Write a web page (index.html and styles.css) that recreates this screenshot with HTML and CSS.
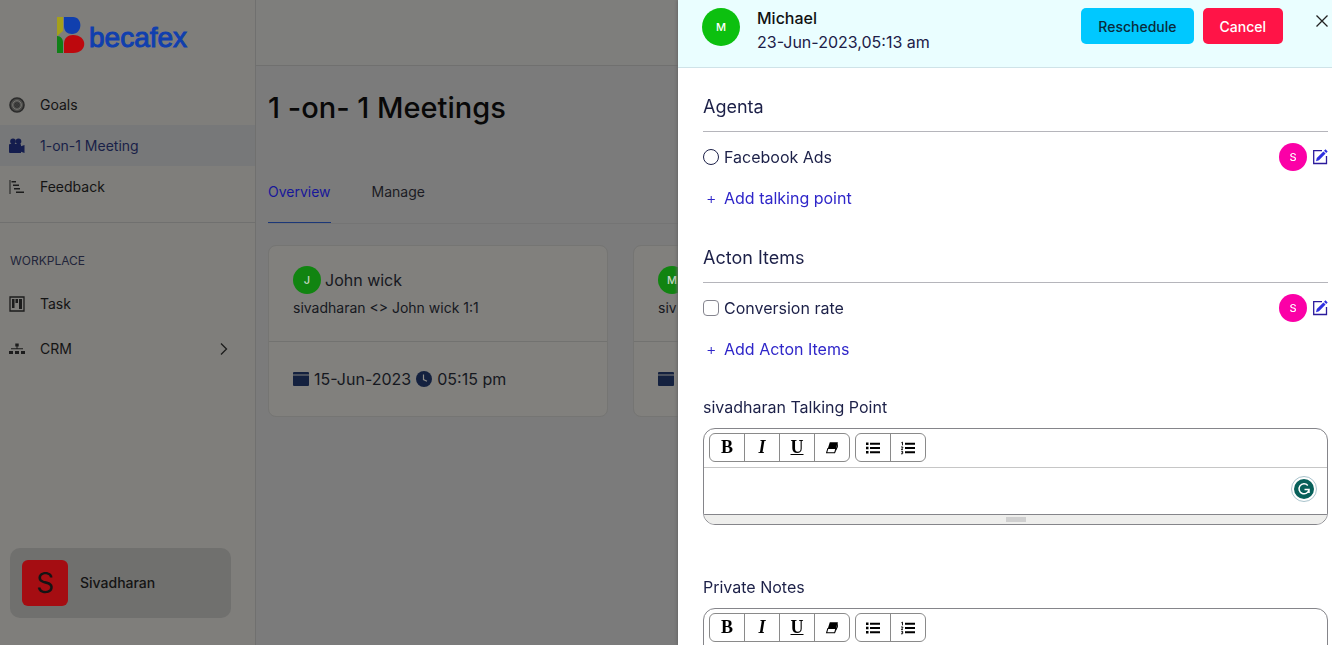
FILE: index.html
```html
<!DOCTYPE html>
<html lang="en">
<head>
<meta charset="UTF-8">
<meta name="viewport" content="width=device-width, initial-scale=1.0">
<title>1-on-1 Meetings</title>
<link rel="stylesheet" href="styles.css">
</head>
<body>
<svg class="defs" aria-hidden="true">
    <symbol id="calendar" viewBox="0 0 16 16"><path d="M1 1h14a1 1 0 0 1 1 1v1.500H0V2a1 1 0 0 1 1-1zM0 4.500h16V14a1 1 0 0 1-1 1H1a1 1 0 0 1-1-1z"/></symbol>
    <symbol id="edit" viewBox="0 0 16 16"><path d="M10 1.700H1.700v12.800h12.800V7" fill="none" stroke="#2b1a9c" stroke-width="1.300"/><path d="M13.500.3l2.200 2.200-1.500 1.500-2.200-2.200zM11.400 2.400l2.200 2.200-6.600 6.600-3 1 .8-3.200z" fill="#2f2fe0"/></symbol>
    <symbol id="eraser" viewBox="0 0 16 16"><path d="M5.500 1.500h9.200L12.500 8.500H3.300z"/><path d="M3.300 8.500h9.200l-1.500 5H1.800z" fill="#fff" stroke="#000" stroke-width="1.200"/><path d="M12.500 8.500l2.200-7v5.300l-3.200 6.700z"/></symbol>
    <symbol id="ul" viewBox="0 0 16 16"><path d="M1 2.500h2.500V5H1zM1 6.800h2.500v2.500H1zM1 11h2.500v2.500H1zM5 2.800h10v2H5zM5 7h10v2H5zM5 11.200h10v2H5z"/></symbol>
    <symbol id="ol" viewBox="0 0 16 16"><path d="M5 2.800h10v2H5zM5 7h10v2H5zM5 11.200h10v2H5z"/><path d="M1.300 2.800l1.200-.7v3.200M1 7h1.800v1L1.200 9.400H3M1.200 11.300h1.600l-.8 1 .9.300-.3 1.200H1" fill="none" stroke="#000" stroke-width=".9"/></symbol>
</svg>

<div class="app">
    <aside class="sidebar">
        <a class="logo" href="#">
            <svg width="28" height="38" viewBox="0 0 28 38">
                <path d="M0 1h6v14L0 20z" fill="#a5a01a"/>
                <path d="M0 20c4 0 6 3 6 7v10H0z" fill="#108017"/>
                <path d="M7 1h9c10 0 10 17-1 17-5 0-8-3-8-8z" fill="#103fae"/>
                <path d="M7 37V28c0-6 4-9 9-9 15 0 15 18 0 18z" fill="#bd080d"/>
            </svg>
            <span>becafex</span>
        </a>
        <nav class="menu">
            <a href="#"><svg width="16" height="16" viewBox="0 0 16 16" fill="none" stroke="#2b2b2b"><circle cx="8" cy="8" r="7" stroke-width="1.600" fill="#4c4c4a"/><circle cx="8" cy="8" r="4.300" stroke="#777672" stroke-width="1"/><circle cx="8" cy="8" r="2.200"/><circle cx="8" cy="8" r=".5"/></svg>Goals</a>
            <a class="active" href="#"><svg width="16" height="16" viewBox="0 0 16 16" fill="#141d4e"><circle cx="4" cy="3.400" r="2.800"/><circle cx="9.500" cy="3.400" r="2.800"/><path d="M1 6h10a1 1 0 0 1 1 1v1.200L15.500 7v8L12 13.800V15H1a1 1 0 0 1-1-1V7a1 1 0 0 1 1-1z"/></svg>1-on-1 Meeting</a>
            <a href="#"><svg width="16" height="16" viewBox="0 0 16 16" fill="none" stroke="#1c1c1c" stroke-width="1.400"><path d="M1 1v14" stroke-width="1"/><path d="M2.500 2.700H7M4 6.200h6M5 9.700h6M7 13.200h8"/></svg>Feedback</a>
        </nav>
        <h2 class="menu-title">WORKPLACE</h2>
        <nav class="menu workplace">
            <a href="#"><svg width="16" height="16" viewBox="0 0 16 16" fill="#1c1c1c"><path d="M1 1h14v14H1z" fill="none" stroke="#1c1c1c" stroke-width="1.300"/><path d="M3 3h2.500v9H3zM6.500 3h2.500v4H6.500zM10 3h3v10h-3z"/></svg>Task</a>
            <a href="#"><svg width="16" height="16" viewBox="0 0 16 16" fill="#1c1c1c"><path d="M6.300 2.500h3.400v3H8.500v1.700H14v1h-12v-1h5.500V5.500H6.300zM0 10h4v3H0zM6 10h4v3H6zM12 10h4v3h-4z"/></svg>CRM<svg class="arrow" width="14" height="14" viewBox="0 0 14 14" fill="none" stroke="#1c1c1c" stroke-width="1.300"><path d="M4 1.500L9.500 7 4 12.500"/></svg></a>
        </nav>
        <div class="user">
            <span class="user-img">S</span>
            <span>Sivadharan</span>
        </div>
    </aside>

    <main class="main">
        <div class="topbar"></div>
        <h1>1 -on- 1 Meetings</h1>
        <nav class="tabs">
            <a class="active" href="#">Overview</a>
            <a href="#">Manage</a>
        </nav>
        <div class="cards">
            <div class="card">
                <div class="card-top">
                    <div class="person"><span class="avatar">J</span>John wick</div>
                    <p>sivadharan &lt;&gt; John wick 1:1</p>
                </div>
                <div class="card-date">
                    <svg width="16" height="16"><use href="#calendar"/></svg>15-Jun-2023
                    <svg width="16" height="16" viewBox="0 0 16 16"><circle cx="8" cy="8" r="8"/><path d="M7.500 3.500V8.500l3.500 1.700" fill="none" stroke="#8d8c88" stroke-width="1.200"/></svg>05:15 pm
                </div>
            </div>
            <div class="card">
                <div class="card-top">
                    <div class="person"><span class="avatar">M</span></div>
                    <p>siv</p>
                </div>
                <div class="card-date">
                    <svg width="16" height="16"><use href="#calendar"/></svg>
                </div>
            </div>
        </div>
    </main>
</div>

<section class="drawer">
    <header class="drawer-head">
        <span class="avatar big">M</span>
        <div class="who">
            <strong>Michael</strong>
            <span>23-Jun-2023,05:13 am</span>
        </div>
        <button class="btn blue">Reschedule</button>
        <button class="btn red">Cancel</button>
        <button class="close" aria-label="Close"><svg width="14" height="14" viewBox="0 0 14 14" stroke="#222" stroke-width="1.300"><path d="M1.500 1.500l11 11M12.500 1.500l-11 11"/></svg></button>
    </header>
    <div class="drawer-body">
        <div class="group">
            <h3>Agenta</h3>
            <div class="item">
                <input type="radio" id="ads"><label for="ads">Facebook Ads</label>
                <span class="avatar pink">S</span>
                <button class="edit" aria-label="Edit"><svg width="16" height="16"><use href="#edit"/></svg></button>
            </div>
            <a class="add" href="#"><span>+</span>Add talking point</a>
        </div>
        <div class="group">
            <h3>Acton Items</h3>
            <div class="item">
                <input type="checkbox" id="rate"><label for="rate">Conversion rate</label>
                <span class="avatar pink">S</span>
                <button class="edit" aria-label="Edit"><svg width="16" height="16"><use href="#edit"/></svg></button>
            </div>
            <a class="add" href="#"><span>+</span>Add Acton Items</a>
        </div>

        <label class="note-label" for="talk">sivadharan Talking Point</label>
        <div class="editor">
            <div class="toolbar">
                <div class="tools">
                    <button><b>B</b></button><button><i>I</i></button><button><u>U</u></button><button aria-label="Clear"><svg width="14" height="14"><use href="#eraser"/></svg></button>
                </div>
                <div class="tools">
                    <button aria-label="Bullets"><svg width="16" height="16"><use href="#ul"/></svg></button><button aria-label="Numbers"><svg width="16" height="16"><use href="#ol"/></svg></button>
                </div>
            </div>
            <textarea id="talk"></textarea>
            <div class="resize"><span></span></div>
            <span class="grammar"><svg width="20" height="20" viewBox="0 0 20 20" fill="none" stroke="#fff" stroke-width="1.500"><circle cx="10" cy="10" r="10" fill="#07605a" stroke="none"/><path d="M13.800 6.500A5 5 0 1 0 15 10.500H10.500M15 10.500V14"/></svg></span>
        </div>

        <label class="note-label" for="notes">Private Notes</label>
        <div class="editor">
            <div class="toolbar">
                <div class="tools">
                    <button><b>B</b></button><button><i>I</i></button><button><u>U</u></button><button aria-label="Clear"><svg width="14" height="14"><use href="#eraser"/></svg></button>
                </div>
                <div class="tools">
                    <button aria-label="Bullets"><svg width="16" height="16"><use href="#ul"/></svg></button><button aria-label="Numbers"><svg width="16" height="16"><use href="#ol"/></svg></button>
                </div>
            </div>
            <textarea id="notes"></textarea>
            <div class="resize"><span></span></div>
        </div>
    </div>
</section>
</body>
</html>
```
FILE: styles.css
```css
* {
    box-sizing: border-box;
}
body {
    margin: 0;
    font-family: Inter, Arial, sans-serif;
    font-size: 16px;
    line-height: 24px;
    color: #1c2048;
    overflow: hidden;
}
a {
    color: inherit;
    text-decoration: none;
}
button {
    font-family: inherit;
    cursor: pointer;
}
.defs {
    display: none;
}
.app {
    display: flex;
    height: 100vh;
    background: #7b7b7b;
}

/* sidebar */
.sidebar {
    display: flex;
    flex-direction: column;
    width: 256px;
    flex-shrink: 0;
    background: #7f7e7b;
    border-right: 1px solid #70706f;
}
.logo {
    display: flex;
    gap: 4px;
    height: 84px;
    padding: 16px 0 0 57px;
    font-family: "Liberation Sans", Arial, sans-serif;
    font-size: 28px;
    line-height: 44px;
    color: #103fae;
    -webkit-text-stroke: 1px #103fae;
}
.menu {
    display: flex;
    flex-direction: column;
    font-size: 14px;
    color: #141414;
    padding-bottom: 15px;
    border-bottom: 1px solid #70706f;
}
.menu a {
    display: flex;
    align-items: center;
    gap: 15px;
    height: 41px;
    padding: 0 24px 0 9px;
}
.menu a.active {
    background: #777879;
    color: #192148;
}
.menu-title {
    margin: 26px 0 8px 10px;
    font-size: 12px;
    font-weight: 400;
    color: #22253a;
}
.workplace {
    border: 0;
}
.workplace a {
    height: 45px;
}
.arrow {
    margin-left: auto;
}
.user {
    display: flex;
    align-items: center;
    gap: 12px;
    margin: auto 24px 27px 10px;
    padding: 12px;
    background: #70706e;
    border-radius: 10px;
    font-size: 14px;
    font-weight: 500;
    color: #141414;
}
.user-img {
    width: 46px;
    height: 46px;
    border-radius: 6px;
    background: #a50d12;
    font-size: 28px;
    font-weight: 400;
    line-height: 46px;
    text-align: center;
}

/* page */
.main {
    flex: 1;
    min-width: 0;
}
.topbar {
    height: 66px;
    background: #7e7e7c;
    border-bottom: 1px solid #70706f;
}
h1 {
    margin: 24px 12px 54px;
    font-size: 29px;
    font-weight: 500;
    line-height: 36px;
    color: #080808;
}
.tabs {
    display: flex;
    gap: 41px;
    margin: 0 12px 21px;
    border-bottom: 1px solid #747474;
    font-size: 14px;
    color: #1c1c24;
}
.tabs a {
    height: 43px;
    border-bottom: 1px solid transparent;
}
.tabs a.active {
    color: #17179a;
    border-color: #1b3778;
}
.cards {
    display: grid;
    grid-template-columns: repeat(auto-fill, 340px);
    gap: 25px;
    padding: 0 12px;
}
.card {
    background: #81807d;
    border: 1px solid #757573;
    border-radius: 8px;
    color: #16181f;
}
.card-top {
    height: 96px;
    padding: 20px 24px;
    border-bottom: 1px solid #727270;
}
.person {
    display: flex;
    align-items: center;
    gap: 4px;
    height: 28px;
}
.card p {
    margin: 2px 0 0;
    font-size: 14px;
}
.card-date {
    display: flex;
    align-items: center;
    gap: 5px;
    height: 74px;
    padding: 0 24px;
    fill: #14213f;
}
.avatar {
    width: 28px;
    height: 28px;
    flex-shrink: 0;
    border-radius: 50%;
    background: #118411;
    color: #c6d6c2;
    font-size: 11px;
    font-weight: 500;
    line-height: 28px;
    text-align: center;
}

/* meeting drawer */
.drawer {
    position: fixed;
    top: 0;
    right: 0;
    bottom: 0;
    width: 654px;
    max-width: 100%;
    overflow: hidden;
    background: #fff;
    box-shadow: -1px 0 3px #666;
}
.drawer-head {
    display: flex;
    align-items: flex-start;
    height: 68px;
    padding: 8px 3px 0 24px;
    background: #eafeff;
    border-bottom: 1px solid #cfe3e8;
}
.avatar.big {
    width: 38px;
    height: 38px;
    margin-right: 17px;
    background: #0cc00f;
    color: #fff;
    line-height: 38px;
}
.who {
    display: flex;
    flex-direction: column;
    margin: -2px auto 0 0;
}
.who strong {
    font-weight: 500;
    color: #111;
}
.btn {
    height: 36px;
    margin-right: 9px;
    padding: 0 17px;
    border: 0;
    border-radius: 5px;
    font-size: 14px;
    font-weight: 500;
}
.blue {
    background: #00c8ff;
    color: #0a2c3c;
}
.red {
    background: #ff1447;
    color: #fff;
}
.close {
    margin: 6px 0 0 23px;
    padding: 0;
    border: 0;
    background: none;
    line-height: 0;
}
.drawer-body {
    padding: 14px 4px 0 25px;
}
.group {
    height: 151px;
}
h3 {
    margin: 0 0 9px;
    padding: 12px 0;
    border-bottom: 1px solid #b5b5bb;
    font-size: 18px;
    font-weight: 400;
    line-height: 25px;
}
.item {
    display: flex;
    align-items: center;
    gap: 5px;
    height: 32px;
}
.item input {
    appearance: none;
    width: 16px;
    height: 16px;
    margin: 0;
    border: 1px solid #85858f;
    border-radius: 4px;
}
.item input[type="radio"] {
    border-color: #1c2048;
    border-radius: 50%;
}
.pink {
    margin-left: auto;
    background: #fb00a7;
    color: #fff;
}
.edit {
    padding: 0;
    border: 0;
    background: none;
    line-height: 0;
}
.add {
    display: flex;
    width: max-content;
    margin-top: 13px;
    color: #2f26c9;
}
.add span {
    width: 21px;
    padding-left: 3px;
    font-weight: 300;
}
.note-label {
    display: block;
    margin: 11px 0 9px;
}
.editor {
    position: relative;
    margin-bottom: 50px;
    border: 1px solid #85858a;
    border-radius: 12px;
    overflow: hidden;
}
.toolbar {
    display: flex;
    gap: 5px;
    padding: 4px 5px 5px;
    border-bottom: 1px solid #c6c6c6;
}
.tools {
    display: flex;
    border: 1px solid #8a8a8a;
    border-radius: 6px;
}
.tools button {
    display: flex;
    align-items: center;
    justify-content: center;
    width: 35px;
    height: 27px;
    padding: 0;
    border: 0;
    border-right: 1px solid #8a8a8a;
    background: none;
    color: #000;
    font-family: "Liberation Serif", serif;
    font-size: 18px;
    font-weight: 700;
}
.tools button:last-child {
    width: 34px;
    border: 0;
}
.editor textarea {
    display: block;
    width: 100%;
    height: 46px;
    border: 0;
    resize: none;
    outline: 0;
}
.resize {
    display: flex;
    justify-content: center;
    height: 10px;
    padding-top: 2px;
    border-top: 1px solid #85858a;
    background: #eeeeec;
}
.resize span {
    width: 20px;
    height: 5px;
    background: #cfcfcf;
}
.grammar {
    position: absolute;
    top: 47px;
    right: 10px;
    padding: 2px;
    border: 1px solid #a9c3cc;
    border-radius: 50%;
    line-height: 0;
}
```
